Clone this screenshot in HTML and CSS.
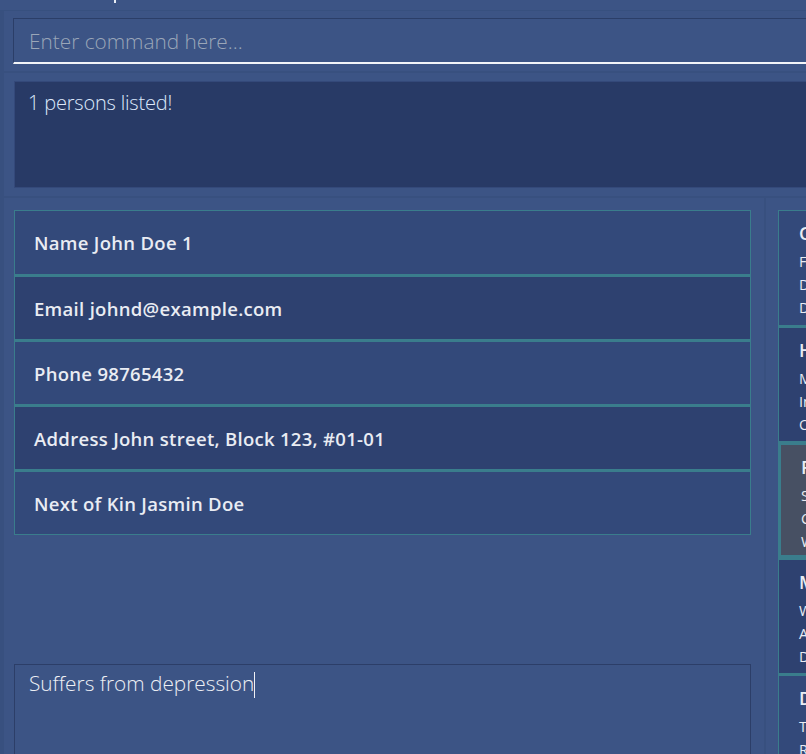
FILE: index.html
```html
<!DOCTYPE html>
<html>
<head>
<meta charset="utf-8">
<link rel="stylesheet" href="styles.css">
</head>
<body>
<div class="app">
  <div class="menubar"><span class="tick"></span></div>
  <div class="pane command-pane">
    <div class="command-box"><span class="placeholder">Enter command here...</span></div>
  </div>
  <div class="pane result-pane">
    <div class="result-box">1 persons listed!</div>
  </div>
  <div class="main">
    <div class="left">
      <div class="details">
        <div class="row light">Name John Doe 1</div>
        <div class="row dark">Email johnd@example.com</div>
        <div class="row light">Phone 98765432</div>
        <div class="row dark">Address John street, Block 123, #01-01</div>
        <div class="row light">Next of Kin Jasmin Doe</div>
      </div>
      <div class="notes"><span class="notes-text">Suffers from depression</span><span class="caret"></span></div>
    </div>
    <div class="divider"></div>
    <div class="right">
      <div class="card light">
        <div class="card-title">Charlotte Oliveiro</div>
        <div class="card-line">Friend</div>
        <div class="card-line">Diagnosis pending</div>
        <div class="card-line">Dr. Lee</div>
      </div>
      <div class="card dark">
        <div class="card-title">Hans Muller</div>
        <div class="card-line">Monday visit</div>
        <div class="card-line">Insomnia</div>
        <div class="card-line">Outpatient</div>
      </div>
      <div class="card selected">
        <div class="card-title">Fiona Tan</div>
        <div class="card-line">Sister</div>
        <div class="card-line">Counselling</div>
        <div class="card-line">Weekly</div>
      </div>
      <div class="card dark">
        <div class="card-title">Marcus Lim</div>
        <div class="card-line">Ward 3</div>
        <div class="card-line">Anxiety</div>
        <div class="card-line">Dr. Ng</div>
      </div>
      <div class="card light">
        <div class="card-title">David Koh</div>
        <div class="card-line">Therapy</div>
        <div class="card-line">Review</div>
      </div>
    </div>
  </div>
</div>
</body>
</html>
```

FILE: styles.css
```css
html, body {
  margin: 0;
  padding: 0;
  background: #3c5485;
  overflow: hidden;
}
.app {
  width: 806px;
  height: 754px;
  display: flex;
  flex-direction: column;
  font-family: "Open Sans", "Noto Sans", sans-serif;
  overflow: hidden;
}
.menubar {
  height: 10px;
  position: relative;
  border-bottom: 1px solid #37507f;
}
.tick {
  position: absolute;
  left: 114px;
  top: 0;
  width: 2px;
  height: 3px;
  background: #e8ecf4;
}
.pane {
  border-left: 4px solid #38507f;
}
.command-pane {
  padding: 7px 0 7px 9px;
  border-bottom: 2px solid #38507f;
}
.command-box {
  height: 43px;
  border-top: 1px solid #2b3e68;
  border-left: 1px solid #2b3e68;
  border-bottom: 2px solid #f2f4f8;
  padding-left: 15px;
  display: flex;
  align-items: center;
}
.placeholder {
  color: #9aa6b8;
  font-size: 20.8px;
  font-weight: 300;
  margin-top: 1px;
}
.result-pane {
  padding: 8px 0 8px 10px;
  border-bottom: 2px solid #38507f;
}
.result-box {
  background: #283a66;
  border: 1px solid #34497a;
  border-right: none;
  padding: 7px 0 0 13px;
  color: #dde9fb;
  font-size: 20px;
  font-weight: 300;
  letter-spacing: -0.2px;
  box-sizing: border-box;
  height: 107px;
}
.main {
  flex: 1;
  display: flex;
  min-height: 0;
}
.left {
  width: 761px;
  border-left: 4px solid #38507f;
  padding: 12px 0 0 10px;
  box-sizing: border-box;
  display: flex;
  flex-direction: column;
}
.details {
  width: 737px;
  display: flex;
  flex-direction: column;
}
.row {
  height: 65px;
  box-sizing: border-box;
  border: 1px solid #3a7d8c;
  padding-left: 19px;
  display: flex;
  align-items: center;
  color: #e9ecf3;
  font-size: 18.5px;
  font-weight: 600;
  letter-spacing: 0.3px;
}
.row + .row {
  border-top: 2px solid #3a7d8c;
}
.light { background: #33497a; }
.dark { background: #2e4170; }
.notes {
  margin-top: 129px;
  width: 737px;
  flex: 1;
  border: 1px solid #2c3e68;
  border-bottom: none;
  box-sizing: border-box;
  padding: 4px 0 0 14px;
  color: #eef0f5;
  font-size: 20.8px;
  font-weight: 300;
  display: flex;
  align-items: flex-start;
}
.caret {
  display: inline-block;
  width: 1px;
  height: 26px;
  margin-top: 3px;
  background: #eef0f5;
}
.divider {
  width: 2px;
  background: #38507f;
  margin-left: 3px;
}
.right {
  flex: 1;
  padding: 12px 0 0 12px;
  display: flex;
  flex-direction: column;
  overflow: hidden;
}
.card {
  height: 116px;
  flex-shrink: 0;
  box-sizing: border-box;
  border: 1px solid #3a7d8c;
  border-right: none;
  padding: 10px 0 0 20px;
  white-space: nowrap;
  overflow: hidden;
  color: #e9ecf3;
}
.card + .card {
  border-top: 2px solid #3a7d8c;
}
.card.selected {
  background: #475063;
  border: 3px solid #3a7d8c;
  border-right: none;
}
.card-title {
  font-size: 18px;
  font-weight: 600;
  line-height: 24px;
  margin-bottom: 5px;
}
.card-line {
  font-size: 14.5px;
  line-height: 23px;
}
```
